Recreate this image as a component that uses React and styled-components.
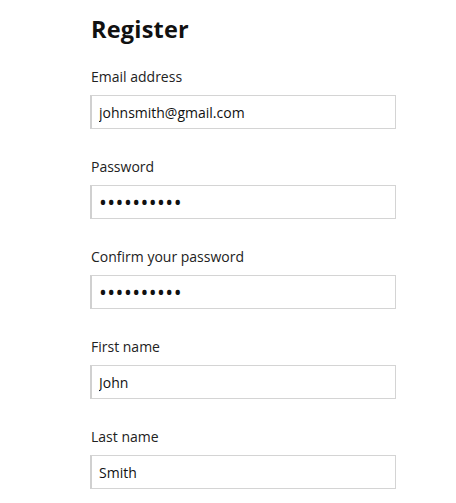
import React from "react";
import styled, { createGlobalStyle } from "styled-components";

const Global = createGlobalStyle`
  html, body { margin: 0; padding: 0; background: #fff; }
  body { font-family: "Open Sans", "Liberation Sans", sans-serif; color: #1a1a1a; }
`;

const Form = styled.form`
  display: flex;
  flex-direction: column;
  width: 306px;
  padding: 14px 0 0 90px;
`;

const Title = styled.h1`
  margin: 0 0 24px 1px;
  font-size: 23.5px;
  line-height: 30px;
  font-weight: 700;
  color: #111;
  letter-spacing: 0.2px;
`;

const Field = styled.div`
  display: flex;
  flex-direction: column;
  gap: 9px;
  margin-bottom: 29px;
`;

const Label = styled.label`
  font-size: 14px;
  line-height: 18px;
  color: #222;
  padding-left: 1px;
`;

const Input = styled.input`
  box-sizing: border-box;
  width: 306px;
  height: 34px;
  margin: 0;
  padding: 0 7px;
  border: 1px solid #d4d4d4;
  border-left: 2px solid #d0d0d0;
  outline: none;
  font-family: "Open Sans", "Liberation Sans", sans-serif;
  font-size: ${(p) => (p.type === "password" ? "21px" : "14px")};
  letter-spacing: ${(p) => (p.type === "password" ? "0.4px" : "0")};
  color: #111;
  background: #fff;
`;

const fields = [
  { label: "Email address", type: "text", value: "johnsmith@gmail.com" },
  { label: "Password", type: "password", value: "1234567890" },
  { label: "Confirm your password", type: "password", value: "1234567890" },
  { label: "First name", type: "text", value: "John" },
  { label: "Last name", type: "text", value: "Smith" },
];

export default function App() {
  return (
    <>
      <Global />
      <Form onSubmit={(e) => e.preventDefault()}>
        <Title>Register</Title>
        {fields.map((f, i) => (
          <Field key={i}>
            <Label htmlFor={`f${i}`}>{f.label}</Label>
            <Input id={`f${i}`} type={f.type} defaultValue={f.value} readOnly />
          </Field>
        ))}
      </Form>
    </>
  );
}
